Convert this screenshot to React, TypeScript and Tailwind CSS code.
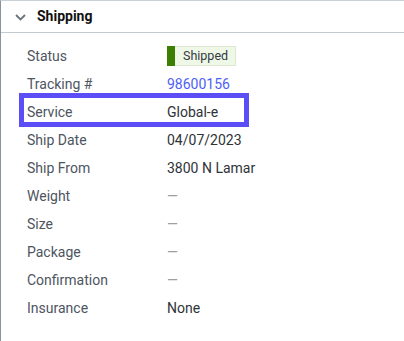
import React from 'react';

const rows: { label: string; value: string; kind?: 'badge' | 'link' | 'dash' }[] = [
  { label: 'Status', value: 'Shipped', kind: 'badge' },
  { label: 'Tracking #', value: '98600156', kind: 'link' },
  { label: 'Service', value: 'Global-e' },
  { label: 'Ship Date', value: '04/07/2023' },
  { label: 'Ship From', value: '3800 N Lamar' },
  { label: 'Weight', value: '—', kind: 'dash' },
  { label: 'Size', value: '—', kind: 'dash' },
  { label: 'Package', value: '—', kind: 'dash' },
  { label: 'Confirmation', value: '—', kind: 'dash' },
  { label: 'Insurance', value: 'None' },
];

function Value({ value, kind }: { value: string; kind?: string }) {
  if (kind === 'badge') {
    return (
      <span className="flex h-[20px] items-stretch border border-[#dde8d2] bg-[#eff8e6]">
        <span className="w-[8px] -my-px -ml-px bg-[#3d7f00]" />
        <span className="flex items-center pl-[8px] pr-[7px] text-[12.5px] text-[#333a44]">{value}</span>
      </span>
    );
  }
  if (kind === 'link') {
    return <span className="text-[#4d5ff7]">{value}</span>;
  }
  if (kind === 'dash') {
    return <span className="text-[#9aa0a8]">{value}</span>;
  }
  return <span className="text-[#2f3338]">{value}</span>;
}

export default function App() {
  return (
    <div
      className="h-[341px] w-[404px] overflow-hidden bg-white border-l border-t border-l-[#8a929b] border-t-[#c9d0d8]"
      style={{ fontFamily: 'Roboto, "Liberation Sans", sans-serif' }}
    >
      <div className="flex h-[32px] items-center gap-[11px] border-b border-[#c3cad4] pl-[14px]">
        <svg width="11" height="7" viewBox="0 0 11 7" className="mt-[1px]">
          <path d="M1 1l4.5 4.5L10 1" fill="none" stroke="#6b737d" strokeWidth="1.8" />
        </svg>
        <span className="text-[14px] font-bold text-[#111]">Shipping</span>
      </div>
      <div className="pt-[9px]">
        {rows.map((r) => (
          <div key={r.label} className="relative flex h-[28px] items-center text-[14px]">
            <span className="w-[166px] pl-[26px] text-[#4d5561]">{r.label}</span>
            <Value value={r.value} kind={r.kind} />
            {r.label === 'Service' && (
              <div className="pointer-events-none absolute left-[18px] top-[-5px] h-[34px] w-[230px] border-[5px] border-[#5c4ef6]" />
            )}
          </div>
        ))}
      </div>
    </div>
  );
}
